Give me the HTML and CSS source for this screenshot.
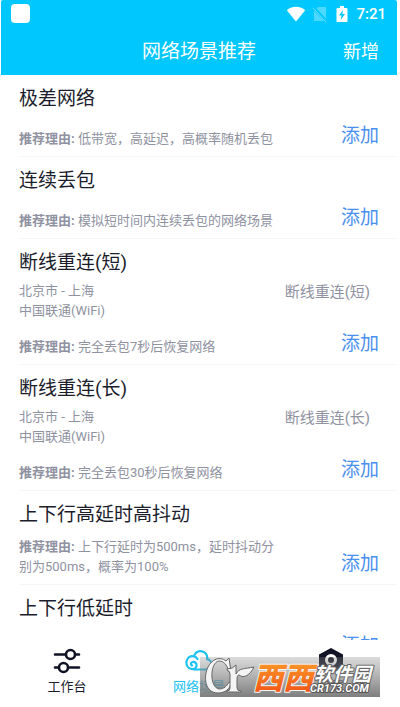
FILE: index.html
```html
<!DOCTYPE html>
<html lang="zh-CN">
<head>
<meta charset="utf-8">
<meta name="viewport" content="width=device-width, initial-scale=1">
<title>网络场景推荐</title>
<link rel="stylesheet" href="styles.css">
</head>
<body>
<div class="app">
  <header class="header">
    <div class="status">
      <span class="status-app"></span>
      <svg class="status-wifi" viewBox="0 0 20 16" width="20" height="16" aria-hidden="true"><path d="M10 15.500 0.800 4.200C3 2 6.200.8 10 .8s7 1.200 9.200 3.400z" fill="#fff"/></svg>
      <svg class="status-sim" viewBox="0 0 14 16" width="14" height="16" aria-hidden="true"><path d="M5 1h8v14H1V5z" fill="#4dd8ff"/><path d="M0 1l14 15" stroke="#00c8ff" stroke-width="3"/><path d="M0 2l13 14" stroke="#6ee0ff" stroke-width="1"/></svg>
      <svg class="status-battery" viewBox="0 0 12 18" width="12" height="18" aria-hidden="true"><path d="M4 1h4v2h2.500q1 0 1 1v12q0 1-1 1h-9q-1 0-1-1V4q0-1 1-1H4z" fill="#fff"/><path d="M7 5 3 10.500h2.500L4.800 15 9 9H6.400z" fill="#00c8ff"/></svg>
      <time class="status-time">7:21</time>
    </div>
    <div class="bar">
      <h1 class="bar-title">网络场景推荐</h1>
      <button class="bar-action" type="button">新增</button>
    </div>
  </header>

  <main class="list">
    <article class="item">
      <h2 class="item-title">极差网络</h2>
      <div class="item-footer">
        <p class="reason"><b>推荐理由:</b> 低带宽，高延迟，高概率随机丢包</p>
        <button class="add" type="button">添加</button>
      </div>
    </article>
    <article class="item">
      <h2 class="item-title">连续丢包</h2>
      <div class="item-footer">
        <p class="reason"><b>推荐理由:</b> 模拟短时间内连续丢包的网络场景</p>
        <button class="add" type="button">添加</button>
      </div>
    </article>
    <article class="item">
      <h2 class="item-title">断线重连(短)</h2>
      <div class="place">
        <p class="place-text">北京市 - 上海<br>中国联通(WiFi)</p>
        <span class="place-kind">断线重连(短)</span>
      </div>
      <div class="item-footer">
        <p class="reason"><b>推荐理由:</b> 完全丢包7秒后恢复网络</p>
        <button class="add" type="button">添加</button>
      </div>
    </article>
    <article class="item">
      <h2 class="item-title">断线重连(长)</h2>
      <div class="place">
        <p class="place-text">北京市 - 上海<br>中国联通(WiFi)</p>
        <span class="place-kind">断线重连(长)</span>
      </div>
      <div class="item-footer">
        <p class="reason"><b>推荐理由:</b> 完全丢包30秒后恢复网络</p>
        <button class="add" type="button">添加</button>
      </div>
    </article>
    <article class="item">
      <h2 class="item-title">上下行高延时高抖动</h2>
      <div class="item-footer">
        <p class="reason"><b>推荐理由:</b> 上下行延时为500ms，延时抖动分别为500ms，概率为100%</p>
        <button class="add" type="button">添加</button>
      </div>
    </article>
    <article class="item">
      <h2 class="item-title">上下行低延时</h2>
      <div class="item-footer">
        <p class="reason"></p>
        <button class="add" type="button">添加</button>
      </div>
    </article>
  </main>

  <nav class="tabs">
    <a class="tab" href="#work">
      <svg viewBox="0 0 28 28" width="28" height="28" fill="none" stroke="#101225" stroke-width="2.600" stroke-linecap="round" aria-hidden="true"><path d="M2 7.500h10.500M22.500 7.500H26M2 20.500h3.500M15.500 20.500H26"/><circle cx="17.500" cy="7.500" r="4.500"/><circle cx="10.500" cy="20.500" r="4.500"/></svg>
      工作台
    </a>
    <a class="tab tab-active" href="#scene">
      <svg viewBox="0 0 28 28" width="28" height="28" fill="none" stroke="#1cc2f2" stroke-width="2.200" stroke-linecap="round" stroke-linejoin="round" aria-hidden="true"><path d="M7 18.500c-1.500-1-1.500-3 .5-3.500 2.500-.5 4.500 1.500 4 4-.5 2-2.500 3.500-5 3-3.500-.7-5.500-4-5-7.500.5-4 4-6 7.500-5C10 6 12.500 4 16 4.200c4.500.3 7 4 6 8 2.500.3 4.500 2.300 4.500 4.800 0 3.500-3 5.500-6 5.500H9M9 9.500q2.500.5 3.500 2.500"/></svg>
      网络场景
    </a>
    <a class="tab" href="#settings">
      <svg viewBox="0 0 28 28" width="28" height="28" aria-hidden="true"><path d="M14 1l12 6.500v14L14 27 2 21.500v-14z" fill="#101225"/><circle cx="14" cy="13" r="4.500" fill="none" stroke="#fff" stroke-width="3"/></svg>
      设置
    </a>
  </nav>

  <div class="mark">
    <svg viewBox="0 0 180 40" width="180" height="40" role="img" aria-label="西西软件园 CR173.COM">
      <defs>
        <linearGradient id="shade" x1="0" y1="0" x2="0" y2="1"><stop offset="0" stop-color="#888" stop-opacity=".3"/><stop offset="1" stop-color="#777" stop-opacity=".95"/></linearGradient>
        <linearGradient id="flame" x1="0" y1="0" x2="0" y2="1"><stop offset="0" stop-color="#ffa82e"/><stop offset="1" stop-color="#f04a14"/></linearGradient>
      </defs>
      <rect width="180" height="40" fill="url(#shade)"/>
      <g fill="#f4f4f4" stroke="#666" stroke-width="1">
        <path d="M29 1 31 15h-2C27 7 23 4 19 4 10 5 9 30 19 32c5 0 8-3 10-7l2 1c-1 6-6 10-13 10C5 36 3 20 8 10 12 2 20-1 26 4z"/>
        <path d="M27 12q6 0 9-4v9c3-6 8-5 18-7-4 8-10 12-15 8-2 0-2 3-2 6v7q0 3 4 3v1H27v-1q3 0 3-3V17q0-3-3-4z"/>
      </g>
      <g class="mark-orange"><text x="53" y="32">西西</text></g>
      <text class="mark-name" x="114" y="24">软件园</text>
      <text class="mark-site" x="110" y="35">CR173.COM</text>
    </svg>
  </div>
</div>
</body>
</html>
```
FILE: styles.css
```css
* {
  box-sizing: border-box;
}

body,
h1,
h2,
p {
  margin: 0;
  font-weight: 400;
}

body {
  background: #fff;
  color: #1b1d2c;
  font-family: Roboto, "Noto Sans CJK SC", sans-serif;
}

button {
  border: 0;
  padding: 0;
  background: none;
  font-family: inherit;
  cursor: pointer;
}

.app {
  position: relative;
  display: flex;
  flex-direction: column;
  height: 100vh;
  padding: 0 3px 0 1px;
  overflow: hidden;
}

.header {
  flex: none;
  background: #00c8ff;
  color: #fff;
  border-radius: 2px 2px 0 0;
}

.status {
  display: flex;
  align-items: center;
  height: 27px;
  padding: 0 11px 0 10px;
}

.status-app {
  width: 19px;
  height: 19px;
  margin-right: auto;
  border-radius: 4px;
  background: #fff;
}

.status-wifi {
  margin-right: 7px;
}

.status-battery {
  margin: 0 8px 0 9px;
}

.status-time {
  font-size: 15px;
  font-weight: 500;
}

.bar {
  display: grid;
  grid-template-columns: 1fr auto 1fr;
  align-items: center;
  height: 48px;
  padding: 2px 18px 0;
}

.bar-title {
  grid-column: 2;
  font-size: 19px;
  line-height: 28px;
}

.bar-action {
  justify-self: end;
  color: #fff;
  font-size: 18px;
  line-height: 28px;
}

.list {
  flex: 1;
  min-height: 0;
  overflow: hidden;
}

.item {
  margin-left: 18px;
  padding: 11px 18px 7px 0;
  border-bottom: 1px solid #f5f5f7;
}

.item-title {
  font-size: 19px;
  line-height: 26px;
}

.place {
  display: flex;
  justify-content: space-between;
  margin: 5px 9px -1px 0;
  color: #8f92a1;
}

.place-text {
  font-size: 13px;
  line-height: 20px;
}

.place-kind {
  font-size: 15px;
  line-height: 22px;
}

.item-footer {
  display: flex;
  align-items: flex-end;
  gap: 60px;
  min-height: 37px;
  padding-top: 9px;
}

.reason {
  flex: 1;
  color: #8f92a1;
  font-size: 13px;
  line-height: 20px;
}

.reason b {
  font-weight: 700;
}

.add {
  flex: none;
  color: #4a90f0;
  font-size: 19px;
  line-height: 26px;
}

.tabs {
  display: flex;
  flex: none;
  height: 67px;
  background: #fff;
}

.tab {
  display: flex;
  flex: 1;
  flex-direction: column;
  align-items: center;
  padding-top: 7px;
  color: #1b1d2c;
  font-size: 13px;
  line-height: 24px;
  text-decoration: none;
}

.tab-active {
  color: #1cc2f2;
}

/* Site badge lying over the tab bar */
.mark {
  position: absolute;
  right: 20px;
  bottom: 10px;
  height: 40px;
  pointer-events: none;
}

.mark text {
  font-family: "Noto Sans CJK SC", sans-serif;
  font-style: italic;
  font-weight: 900;
  paint-order: stroke;
  stroke-linejoin: round;
}

.mark-orange text {
  fill: url(#flame);
  stroke: #f4f4f4;
  stroke-width: 2px;
  font-size: 30px;
}

.mark .mark-name {
  fill: #fff;
  stroke: #666;
  stroke-width: 2px;
  font-size: 19px;
  font-weight: 700;
}

.mark .mark-site {
  fill: #fff;
  stroke: #555;
  stroke-width: 2px;
  font-family: Roboto, sans-serif;
  font-size: 11px;
  font-weight: 700;
}
```
